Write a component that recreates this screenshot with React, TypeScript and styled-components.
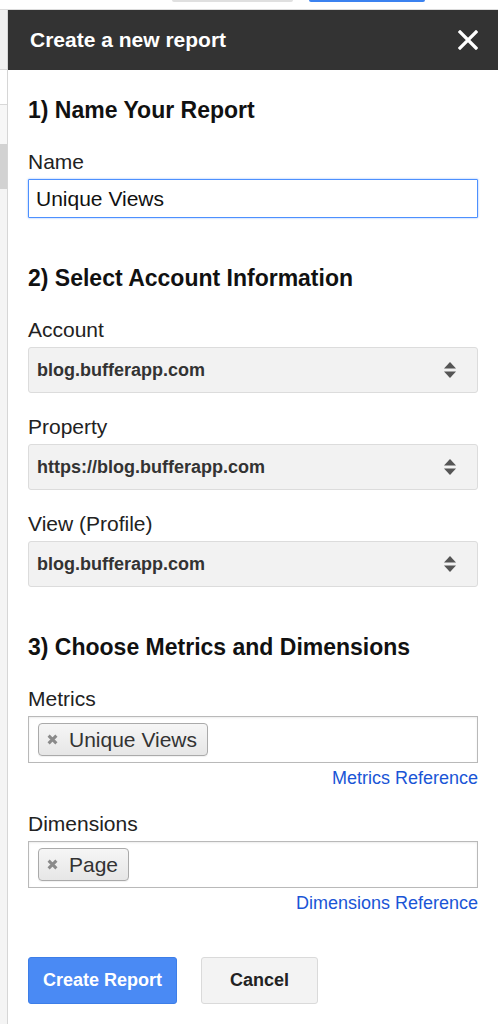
import React from "react";
import styled, { createGlobalStyle } from "styled-components";

const GlobalStyle = createGlobalStyle`
  html, body {
    margin: 0;
    padding: 0;
    background: #fff;
  }
  body {
    font-family: "Liberation Sans", Arial, Helvetica, sans-serif;
    color: #222;
  }
  * {
    box-sizing: border-box;
  }
`;

interface Field {
  label: string;
  value: string;
}

const accountFields: Field[] = [
  { label: "Account", value: "blog.bufferapp.com" },
  { label: "Property", value: "https://blog.bufferapp.com" },
  { label: "View (Profile)", value: "blog.bufferapp.com" },
];

const CloseIcon = () => (
  <svg width="20" height="20" viewBox="0 0 20 20">
    <path d="M2 2 L18 18 M18 2 L2 18" stroke="#fff" strokeWidth="3.2" strokeLinecap="square" />
  </svg>
);

const SortArrows = () => (
  <svg width="12" height="16" viewBox="0 0 12 16">
    <path d="M6 0 L12 6.5 L0 6.5 Z" fill="#555" />
    <path d="M0 9.5 L12 9.5 L6 16 Z" fill="#555" />
  </svg>
);

const RemoveMark = () => (
  <svg width="11" height="11" viewBox="0 0 11 11">
    <path d="M1.6 1.6 L9.4 9.4 M9.4 1.6 L1.6 9.4" stroke="#8a8a8a" strokeWidth="3" />
  </svg>
);

export default function App() {
  return (
    <Page>
      <GlobalStyle />
      <TopStrip>
        <PeekButton $kind="gray" />
        <PeekButton $kind="blue" />
      </TopStrip>
      <Main>
        <Backdrop>
          <BackBlock $h={60} $bg="#f1f1f1" $line />
          <BackBlock $h={35} $bg="#ffffff" $line />
          <BackBlock $h={39} $bg="#f7f7f7" />
          <BackBlock $h={45} $bg="#d2d2d2" />
          <BackFill />
        </Backdrop>
        <Panel>
          <Header>
            <HeaderTitle>Create a new report</HeaderTitle>
            <CloseButton aria-label="close">
              <CloseIcon />
            </CloseButton>
          </Header>
          <Body>
            <SectionTitle>1) Name Your Report</SectionTitle>
            <FieldBox>
              <Label>Name</Label>
              <TextInput defaultValue="Unique Views" />
            </FieldBox>

            <SectionTitle>2) Select Account Information</SectionTitle>
            {accountFields.map((f) => (
              <FieldBox key={f.label}>
                <Label>{f.label}</Label>
                <Select>
                  <SelectValue>{f.value}</SelectValue>
                  <SortArrows />
                </Select>
              </FieldBox>
            ))}

            <SectionTitle>3) Choose Metrics and Dimensions</SectionTitle>
            <FieldBox>
              <Label>Metrics</Label>
              <ChipBox>
                <Chip>
                  <RemoveMark />
                  Unique Views
                </Chip>
              </ChipBox>
              <RefLink href="#">Metrics Reference</RefLink>
            </FieldBox>
            <FieldBox>
              <Label>Dimensions</Label>
              <ChipBox>
                <Chip>
                  <RemoveMark />
                  Page
                </Chip>
              </ChipBox>
              <RefLink href="#">Dimensions Reference</RefLink>
            </FieldBox>

            <Actions>
              <Button $primary>Create Report</Button>
              <Button>Cancel</Button>
            </Actions>
          </Body>
        </Panel>
      </Main>
    </Page>
  );
}

const Page = styled.div`
  width: 498px;
  height: 1024px;
  overflow: hidden;
  display: flex;
  flex-direction: column;
`;

const TopStrip = styled.div`
  height: 10px;
  flex-shrink: 0;
  display: flex;
  align-items: flex-start;
  gap: 16px;
  padding-left: 172px;
  border-bottom: 1px solid #dcdcdc;
`;

const PeekButton = styled.div<{ $kind: "gray" | "blue" }>`
  width: ${({ $kind }) => ($kind === "gray" ? 121 : 116)}px;
  height: 2px;
  border-radius: 0 0 2px 2px;
  background: ${({ $kind }) => ($kind === "gray" ? "#e0e0e0" : "#3b82f0")};
`;

const Main = styled.div`
  flex: 1;
  display: flex;
  min-height: 0;
`;

const Backdrop = styled.div`
  width: 7px;
  flex-shrink: 0;
  display: flex;
  flex-direction: column;
  overflow: hidden;
`;

const BackBlock = styled.div<{ $h: number; $bg: string; $line?: boolean }>`
  height: ${({ $h }) => $h}px;
  flex-shrink: 0;
  background: ${({ $bg }) => $bg};
  border-bottom: ${({ $line }) => ($line ? "1px solid #d8d8d8" : "none")};
`;

const BackFill = styled.div`
  flex: 1;
  background: #f4f4f4;
`;

const Panel = styled.div`
  flex: 1;
  display: flex;
  flex-direction: column;
  border-left: 1px solid #d6d6d6;
  background: #fff;
`;

const Header = styled.div`
  height: 60px;
  flex-shrink: 0;
  background: #333333;
  display: flex;
  align-items: center;
  justify-content: space-between;
  padding: 0 20px 0 22px;
`;

const HeaderTitle = styled.h1`
  margin: 0;
  font-size: 21px;
  font-weight: bold;
  color: #fff;
`;

const CloseButton = styled.button`
  border: none;
  background: none;
  padding: 0;
  display: flex;
  cursor: pointer;
`;

const Body = styled.div`
  padding: 0 20px;
  display: flex;
  flex-direction: column;
`;

const SectionTitle = styled.h2`
  margin: 47px 0 5px;
  font-size: 23px;
  line-height: 26px;
  font-weight: bold;
  color: #111;

  &:first-child {
    margin-top: 27px;
  }
`;

const FieldBox = styled.div`
  display: flex;
  flex-direction: column;
  margin-top: 22px;
`;

const Label = styled.label`
  font-size: 21px;
  line-height: 24px;
  color: #222;
  margin-bottom: 5px;
`;

const TextInput = styled.input`
  height: 39px;
  border: 1px solid #4d90fe;
  box-shadow: 0 0 2px rgba(77, 144, 254, 0.7);
  border-radius: 1px;
  padding: 0 7px;
  font-family: inherit;
  font-size: 21px;
  color: #111;
  outline: none;
`;

const Select = styled.div`
  height: 46px;
  border: 1px solid #dcdcdc;
  border-radius: 3px;
  background: #f2f2f2;
  display: flex;
  align-items: center;
  justify-content: space-between;
  padding: 0 21px 0 8px;
`;

const SelectValue = styled.span`
  font-size: 18px;
  font-weight: bold;
  color: #333;
`;

const ChipBox = styled.div`
  height: 47px;
  border: 1px solid #b9b9b9;
  box-shadow: inset 0 1px 2px rgba(0, 0, 0, 0.08);
  display: flex;
  align-items: center;
  padding: 0 9px;
`;

const Chip = styled.span`
  height: 33px;
  display: inline-flex;
  align-items: center;
  gap: 11px;
  padding: 0 10px 0 8px;
  border: 1px solid #aaa;
  border-radius: 4px;
  background: linear-gradient(#f6f6f6, #e6e6e6);
  box-shadow: 0 1px 1px rgba(0, 0, 0, 0.06);
  font-size: 21px;
  color: #333;
`;

const RefLink = styled.a`
  align-self: flex-end;
  margin-top: 3px;
  font-size: 18px;
  line-height: 24px;
  color: #1a55d6;
  text-decoration: none;
`;

const Actions = styled.div`
  display: flex;
  gap: 24px;
  margin-top: 42px;
`;

const Button = styled.button<{ $primary?: boolean }>`
  height: 47px;
  padding: 0 ${({ $primary }) => ($primary ? 14 : 28)}px;
  border-radius: 3px;
  border: 1px solid ${({ $primary }) => ($primary ? "#3d7ee8" : "#dadada")};
  background: ${({ $primary }) => ($primary ? "#4a8af4" : "#f3f3f3")};
  color: ${({ $primary }) => ($primary ? "#fff" : "#222")};
  font-family: inherit;
  font-size: 18px;
  font-weight: bold;
  cursor: pointer;
`;
